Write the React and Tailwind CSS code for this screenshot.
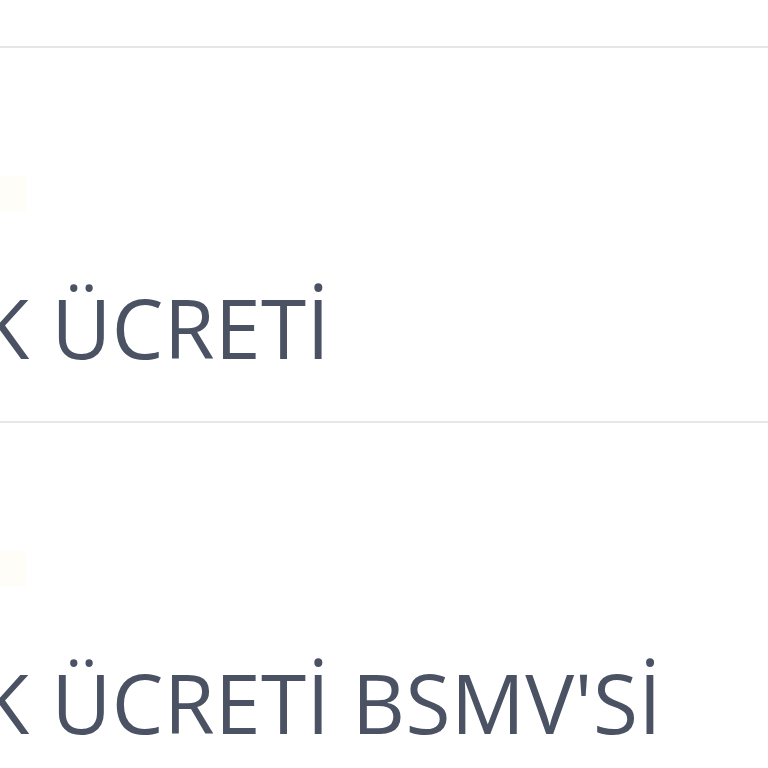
export default function App() {
  const rows = ["K ÜCRETİ", "K ÜCRETİ BSMV'Sİ"];
  return (
    <div
      className="w-[768px] h-[768px] overflow-hidden bg-white"
      style={{ fontFamily: '"Open Sans", "Noto Sans", sans-serif' }}
    >
      <div className="h-[46px]" />
      {rows.map((t, i) => (
        <div key={i} className="border-t-2 border-[#e6e6e6] h-[375px] flex flex-col">
          <div className="mt-[128px] h-[36px] w-[26px] bg-[#fffdf8]" />
          <div className="mt-[74px] ml-[-21px] whitespace-nowrap text-[82px] leading-none tracking-[0.5px] text-[#4a5263]">
            {t}
          </div>
        </div>
      ))}
    </div>
  );
}
